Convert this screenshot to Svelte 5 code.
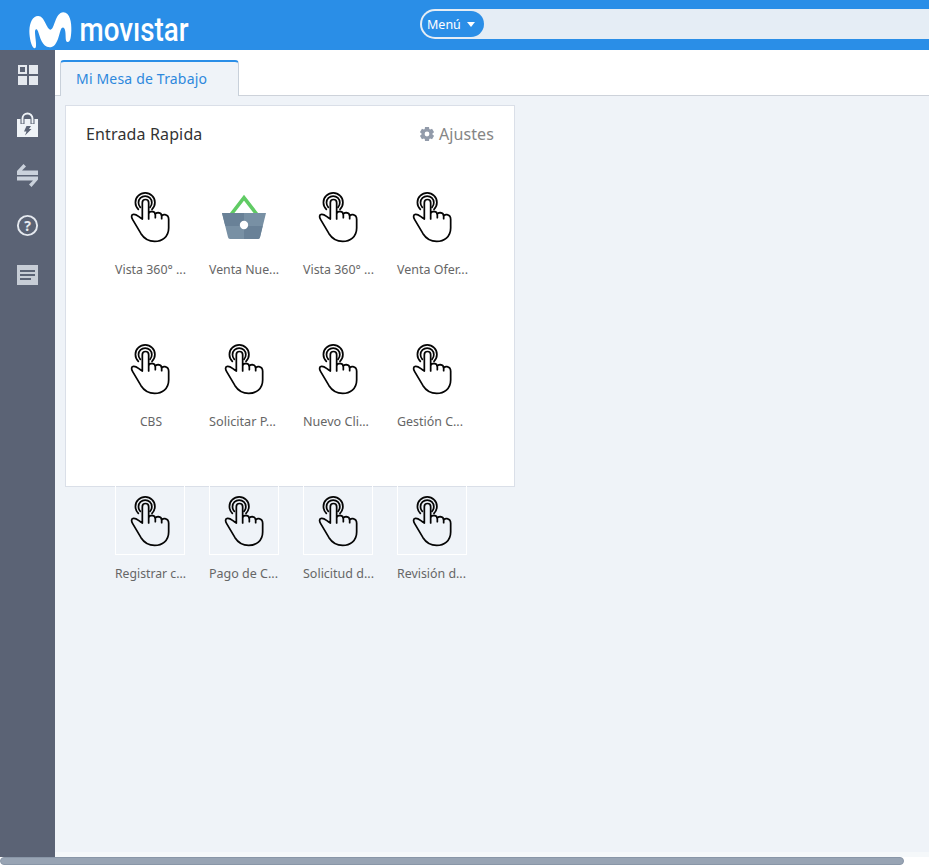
<script>
  const shortcuts = [
    { label: 'Vista 360° ...', width: 71 },
    { label: 'Venta Nue...', width: 70, basket: true },
    { label: 'Vista 360° ...', width: 71 },
    { label: 'Venta Ofer...', width: 71 },
    { label: 'CBS', width: 22 },
    { label: 'Solicitar P...', width: 67 },
    { label: 'Nuevo Cli...', width: 66 },
    { label: 'Gestión C...', width: 66 },
    { label: 'Registrar c...', width: 71 },
    { label: 'Pago de C...', width: 69 },
    { label: 'Solicitud d...', width: 71 },
    { label: 'Revisión d...', width: 69 }
  ];
</script>

<div class="page">
  <header>
    <svg class="logo" width="200" height="50" viewBox="0 0 200 50">
      <path fill="#fff" transform="scale(.33333)" d="M103 145C94 142 88 112 88 93C89 66 98 49 114 48C134 47 139 88 152 89C164 88 165 38 190 37C210 37 215 68 214 92C213 112 211 126 203 126C195 126 198 108 196 95C194 80 186 79 182 90C176 107 172 142 149 142C126 142 120 110 114 94C110 83 104 88 105 98C106 118 113 146 103 145Z" />
      <text x="79.500" y="40.500" textLength="109" lengthAdjust="spacingAndGlyphs">movıstar</text>
    </svg>
    <div class="search"><button>Menú <i></i></button></div>
  </header>

  <div class="body">
    <nav>
      <svg viewBox="0 0 22 22" fill="#e5e9ef"><path fill-rule="evenodd" d="M1 0h9v9H1zM3 2v5h5V2zM12 0h9v9h-9zM1 11h9v9H1zM12 11h9v9h-9z" /></svg>
      <svg viewBox="0 0 22 22"><path fill="#eff3f7" d="M0 4h21v18H0z" /><path d="M5.500 9V4.500a5 5 0 0 1 10 0V9" fill="none" stroke="#5b6375" stroke-width="4" /><path d="M5.500 8.500V3.500a5 5 0 0 1 10 0v5" fill="none" stroke="#eff3f7" stroke-width="1.900" /><path fill="#5b6375" d="M9.500 11H14l-2 3h2.500L8 20.500l1.500-4H7z" /></svg>
      <svg viewBox="0 0 22 22" fill="#cbd2dc"><path d="M0 10V6L6.500-1L9 1.500L5 5.500H21V10zM0 11.500h21v3L14.500 22L12 19.500l4-4H0z" /></svg>
      <svg viewBox="0 0 22 22"><circle cx="10.500" cy="10.500" r="9.600" fill="none" stroke="#e5e9ef" stroke-width="1.900" /><text x="10.500" y="15.500" text-anchor="middle" class="question">?</text></svg>
      <svg viewBox="0 0 22 22"><path fill="#c7cdd6" d="M0 0h21v20H0z" /><path d="M3 6h15M3 10h15M3 14h11" stroke="#5b6375" stroke-width="2" /></svg>
    </nav>

    <main>
      <div class="tabs"><div class="tab"><span>Mi Mesa de Trabajo</span></div></div>
      <section class="card">
        <div class="heading">
          <h1>Entrada Rapida</h1>
          <div class="settings">
            <svg width="14" height="14" viewBox="-7 -7 14 14">
              <g fill="#929baa">
                {#each [0, 60, 120, 180, 240, 300] as angle}<path d="M-2-7h4l.5 4h-5z" transform={`rotate(${angle})`} />{/each}
              </g>
              <circle r="3.900" fill="none" stroke="#929baa" stroke-width="3" />
            </svg>
            <span>Ajustes</span>
          </div>
        </div>
        <div class="grid">
          {#each shortcuts as item}
            <div class="shortcut">
              <div class="tile">
                {#if item.basket}
                  <svg viewBox="327 3 210 210">
                    <path d="M392 105L432 53L472 105" fill="none" stroke="#60cb64" stroke-width="11" />
                    <path d="M366 99H498L480 172Q479 177 474 177H390Q385 177 384 172Z" fill="#7890a4" />
                    <path d="M366 99H432V138H376ZM432 138H488L480 172Q479 177 474 177H432Z" fill="#698197" />
                    <circle cx="432" cy="135" r="12.500" fill="#fff" />
                  </svg>
                {:else}
                  <svg viewBox="45 3 210 210" fill="none" stroke="#050505" stroke-width="5.200" stroke-linecap="round" stroke-linejoin="round">
                    <path d="M115 88A29 29 0 1 1 156 88M121 82A20 20 0 1 1 150 82" />
                    <path d="M127 117V68a9.500 9.500 0 0 1 19 0V117M147 99Q150 94 156 94Q166 95 166 105V113M167 101Q170 98 175 98Q185 99 185 109V116M186 107Q189 103 195 104Q206 106 206 118V144C206 171 186 184 164 184C143 184 132 175 123 161L98 119C93 111 94 104 100 103C108 101 113 108 127 117" />
                  </svg>
                {/if}
              </div>
              <svg class="label" viewBox="0 0 72 20"><text x={item.label === 'CBS' ? 25 : 0} y="15" textLength={item.width} lengthAdjust="spacingAndGlyphs">{item.label}</text></svg>
            </div>
          {/each}
        </div>
      </section>
    </main>
  </div>
  <div class="scroll"><div></div></div>
</div>

<style>
  :global(body) { overflow: hidden; }
  .page { width: 929px; height: 865px; display: flex; flex-direction: column; overflow: hidden; background: #eff3f8; font-family: "Noto Sans", "Open Sans", sans-serif; }
  header { height: 50px; flex: none; display: flex; align-items: flex-start; background: #2a8ee7; }
  .logo { display: block; margin-right: 220px; }
  .logo text { font: 500 33px Roboto, sans-serif; fill: #fff; }
  .search { box-sizing: border-box; height: 30px; flex: 1; margin-top: 9px; padding: 2px; border-radius: 15px 0 0 15px; background: #e5edf5; }
  button { width: 62px; height: 26px; padding: 0 0 0 5px; display: flex; align-items: center; gap: 6px; border: 0; border-radius: 13px; background: #2a8ee7; color: #fff; font: 12.500px "Noto Sans", sans-serif; }
  button i { border: 4px solid transparent; border-top: 5px solid #fff; border-bottom: 0; }
  .body { display: flex; height: 807px; flex: none; }
  nav { box-sizing: border-box; width: 55px; flex: none; padding: 15px 0 0 17px; display: flex; flex-direction: column; gap: 28px; background: #5b6375; }
  nav svg { width: 22px; height: 22px; overflow: visible; }
  .question { font: bold 14px "Noto Sans", sans-serif; fill: #e5e9ef; }
  main { flex: 1; min-width: 0; box-sizing: border-box; border-bottom: 5px solid #f5f8fa; }
  .tabs { box-sizing: border-box; height: 46px; padding: 10px 0 0 5px; background: #fff; border-bottom: 1px solid #cdd2da; }
  .tab { box-sizing: border-box; width: 179px; height: 36px; display: flex; align-items: center; padding: 0 0 2px 15px; border: 1px solid #c8d0da; border-top: 2px solid #2a8ee7; border-bottom: 0; border-radius: 4px 4px 0 0; background: #eff3f8; color: #2d88dd; font-size: 14px; letter-spacing: .18px; white-space: nowrap; }
  .card { box-sizing: border-box; width: 450px; height: 382px; margin: 9px 0 0 10px; border: 1px solid #dadfe8; background: #fff; }
  .heading { height: 56px; padding: 0 20px; display: flex; justify-content: space-between; align-items: center; }
  h1 { margin: 0; font-size: 16px; font-weight: 400; letter-spacing: .14px; color: #333; }
  .settings { display: flex; align-items: center; gap: 5px; color: #858585; font-size: 16px; letter-spacing: .1px; }
  .grid { display: grid; grid-template-columns: repeat(4, 94px); grid-auto-rows: 152px; padding: 19px 0 0 49px; }
  .tile { box-sizing: border-box; width: 70px; height: 70px; border: 1px solid #fff; }
  .tile svg { display: block; width: 70px; height: 70px; margin: -1px; }
  .label { display: block; width: 72px; height: 20px; margin-top: 8px; overflow: visible; }
  .label text { font-size: 12.500px; fill: #666; }
  .scroll { height: 8px; flex: none; background: #fff; }
  .scroll div { box-sizing: border-box; width: 904px; height: 8px; border: 1px solid #8996a7; border-radius: 4px; background: #98a4b4; }
</style>
